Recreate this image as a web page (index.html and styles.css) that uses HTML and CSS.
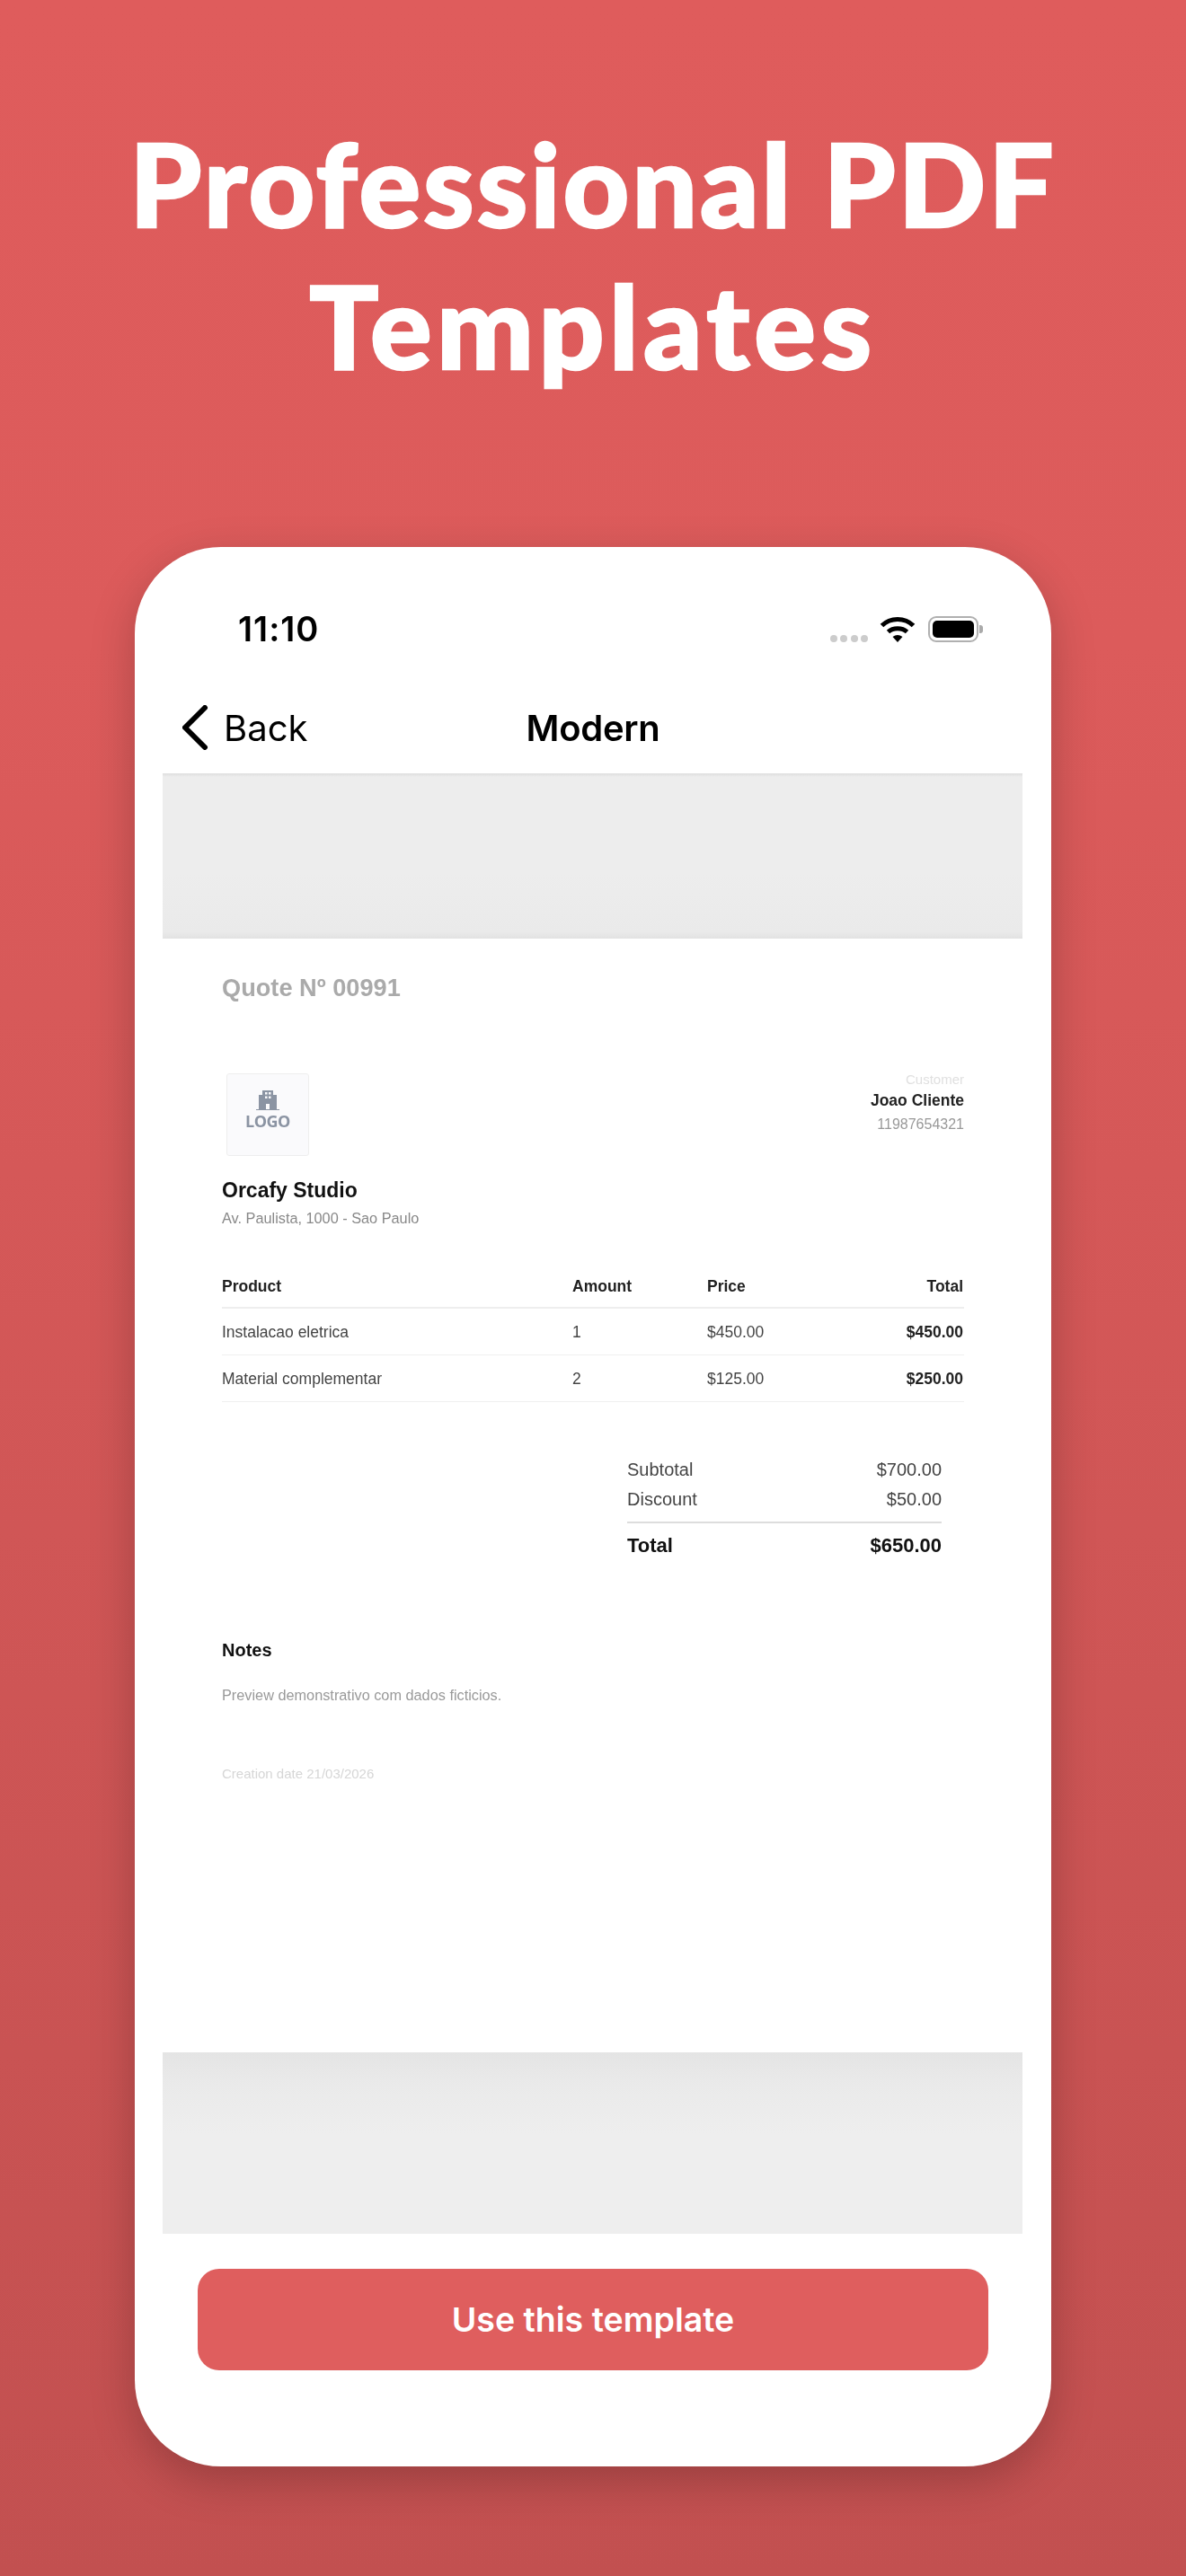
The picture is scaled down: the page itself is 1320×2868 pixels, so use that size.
FILE: index.html
```html
<!DOCTYPE html>
<html lang="en">
<head>
    <meta charset="UTF-8">
    <meta name="viewport" content="width=device-width, initial-scale=1.0">
    <title>Professional PDF Templates</title>
    <link rel="stylesheet" href="styles.css">
</head>
<body>
<h1 class="headline">Professional PDF<br><span class="headline-second">Templates</span></h1>

<div class="phone">
    <div class="status">
        <span class="clock">11:10</span>
        <div class="status-icons">
            <div class="signal"><i></i><i></i><i></i><i></i></div>
            <svg class="wifi" width="40" height="30" viewBox="0 0 40 30">
                <path d="M2.5 11.5C12 2 28 2 37.500 11.500" fill="none" stroke="#000" stroke-width="5"/>
                <path d="M9.500 18.500C15 13.500 25 13.500 30.500 18.500" fill="none" stroke="#000" stroke-width="5"/>
                <path d="M14.500 24Q20 20 25.500 24L20 30Z" fill="#000"/>
            </svg>
            <div class="battery"><div class="battery-level"></div></div>
        </div>
    </div>

    <div class="nav">
        <div class="back">
            <svg width="30" height="50" viewBox="0 0 30 50">
                <path d="M26 3L4 25L26 47" fill="none" stroke="#000" stroke-width="6" stroke-linecap="round" stroke-linejoin="round"/>
            </svg>
            <span>Back</span>
        </div>
        <div class="nav-title">Modern</div>
    </div>

    <div class="sheet-edge sheet-edge-top"></div>

    <div class="doc">
        <div class="doc-number">Quote Nº 00991</div>

        <div class="doc-head">
            <div>
                <div class="logo-box">
                    <svg width="26" height="22" viewBox="0 0 26 22">
                        <path d="M7 0H19V5H23V21H26V22H0V21H3V5H7Z" fill="#8b94a3"/>
                        <path d="M10 2h2.500v2.500H10zM14 2h2.500v2.500H14zM10 6.500h2.500V9H10zM14 6.500h2.500V9H14zM11 15h4v6h-4z" fill="#fafafc"/>
                    </svg>
                    <span class="logo-word">LOGO</span>
                </div>
                <div class="company">Orcafy Studio</div>
                <div class="address">Av. Paulista, 1000 - Sao Paulo</div>
            </div>
            <div class="customer">
                <div class="customer-label">Customer</div>
                <div class="customer-name">Joao Cliente</div>
                <div class="customer-phone">11987654321</div>
            </div>
        </div>

        <div class="items">
            <div class="item-row item-head">
                <span>Product</span><span>Amount</span><span>Price</span><span class="item-total">Total</span>
            </div>
            <div class="item-row">
                <span>Instalacao eletrica</span><span>1</span><span>$450.00</span><span class="item-total">$450.00</span>
            </div>
            <div class="item-row">
                <span>Material complementar</span><span>2</span><span>$125.00</span><span class="item-total">$250.00</span>
            </div>
        </div>

        <div class="totals">
            <div class="totals-row"><span>Subtotal</span><span>$700.00</span></div>
            <div class="totals-row"><span>Discount</span><span>$50.00</span></div>
            <div class="totals-row totals-grand"><span>Total</span><span>$650.00</span></div>
        </div>

        <div class="notes-title">Notes</div>
        <div class="notes-text">Preview demonstrativo com dados ficticios.</div>
        <div class="created">Creation date 21/03/2026</div>
    </div>

    <div class="sheet-edge sheet-edge-bottom"></div>

    <div class="use-btn">Use this template</div>
</div>
</body>
</html>
```

FILE: styles.css
```css
* {
    box-sizing: border-box;
}
html, body {
    margin: 0;
    padding: 0;
}
body {
    width: 1320px;
    height: 2868px;
    overflow: hidden;
    background: linear-gradient(180deg, #df5c5c 0%, #dc5b5b 25%, #c25050 100%);
    font-family: "Liberation Sans", Arial, sans-serif;
}

.headline {
    margin: 0;
    height: 609px;
    padding-top: 125px;
    text-align: center;
    color: #fff;
    font-family: Lato, "Noto Sans", sans-serif;
    font-weight: 900;
    font-size: 128px;
    line-height: 158px;
    letter-spacing: 3px;
    -webkit-text-stroke: 2.5px #fff;
}
.headline-second {
    letter-spacing: 5.500px;
}

.phone {
    width: 1020px;
    height: 2137px;
    margin-left: 150px;
    display: flex;
    flex-direction: column;
    background: #fff;
    border-radius: 96px;
    box-shadow: 0 16px 50px rgba(0, 0, 0, 0.22);
}

.status {
    display: flex;
    justify-content: space-between;
    align-items: center;
    height: 30px;
    margin-top: 76px;
    padding: 0 81px 0 115px;
    font-family: Inter, sans-serif;
    filter: blur(0.5px);
}
.clock {
    font-size: 38px;
    font-weight: 600;
    letter-spacing: 1px;
    color: #000;
}
.status-icons {
    display: flex;
    align-items: center;
}
.signal {
    display: flex;
    gap: 3.500px;
    margin: 22px 13px 0 0;
}
.signal i {
    width: 8px;
    height: 8px;
    border-radius: 50%;
    background: #ccc;
}
.battery {
    position: relative;
    width: 56px;
    height: 29px;
    margin-left: 14px;
    padding: 3px;
    border: 2px solid #b0b0b0;
    border-radius: 9px;
}
.battery::after {
    content: "";
    position: absolute;
    right: -7px;
    top: 8px;
    width: 4px;
    height: 9px;
    background: #aaa;
    border-radius: 0 3px 3px 0;
}
.battery-level {
    width: 100%;
    height: 100%;
    background: #000;
    border-radius: 5px;
}

.nav {
    display: grid;
    grid-template-columns: 1fr auto 1fr;
    align-items: center;
    height: 146px;
    padding: 44px 52px 0;
    font-family: Inter, sans-serif;
    font-size: 40px;
    color: #000;
    filter: blur(0.5px);
}
.back {
    display: flex;
    align-items: center;
    gap: 17px;
}
.nav-title {
    font-weight: 600;
    letter-spacing: -0.300px;
}

.sheet-edge {
    height: 184px;
    margin: 0 32px 0 31px;
    background: linear-gradient(180deg, #dedede 0, #ededed 4px, #ededed 60%, #eaeaea 96%, #e2e2e2 100%);
}
.sheet-edge-bottom {
    height: 202px;
    background: linear-gradient(180deg, #e4e4e4 0%, #eaeaea 18%, #eeeeee 45%, #eeeeee 100%);
}

.doc {
    flex: 1;
    margin: 0 97px;
    padding-top: 39px;
    filter: blur(0.7px);
}
.doc-number {
    font-size: 27.200px;
    line-height: 32px;
    font-weight: 700;
    color: #aaa;
}
.doc-head {
    display: flex;
    justify-content: space-between;
    margin-top: 77px;
}
.logo-box {
    display: flex;
    flex-direction: column;
    align-items: center;
    width: 92px;
    height: 92px;
    margin: 2px 0 0 5px;
    padding-top: 18px;
    background: #fafafc;
    border: 1px solid #eee;
    border-radius: 3px;
}
.logo-word {
    margin-top: 2px;
    font-family: "Open Sans", sans-serif;
    font-size: 18px;
    line-height: 20px;
    letter-spacing: -0.500px;
    font-weight: 700;
    color: #8b94a3;
}
.company {
    margin-top: 24px;
    font-size: 23px;
    line-height: 28px;
    font-weight: 700;
    color: #111;
}
.address {
    margin-top: 7px;
    font-size: 16.300px;
    line-height: 20px;
    color: #888;
}
.customer {
    text-align: right;
}
.customer-label {
    font-size: 15px;
    line-height: 18px;
    color: #e0e0e0;
}
.customer-name {
    margin-top: 4px;
    font-size: 17.500px;
    line-height: 21px;
    font-weight: 700;
    color: #222;
}
.customer-phone {
    margin-top: 6px;
    font-size: 16px;
    line-height: 20px;
    color: #999;
}

.items {
    margin-top: 56px;
}
.item-row {
    display: grid;
    grid-template-columns: 390px 150px 1fr auto;
    padding: 16px 1px 15px 0;
    border-bottom: 1px solid #f0f0f0;
    font-size: 17.500px;
    line-height: 20px;
    color: #444;
}
.item-head {
    padding-top: 0;
    padding-bottom: 13px;
    border-bottom: 2px solid #eee;
    font-weight: 700;
    color: #222;
}
.item-total {
    font-weight: 700;
    color: #222;
}

.totals {
    width: 350px;
    margin: 59px 25px 0 auto;
}
.totals-row {
    display: flex;
    justify-content: space-between;
    font-size: 20px;
    line-height: 33px;
    color: #444;
}
.totals-grand {
    margin-top: 8px;
    padding-top: 11px;
    border-top: 2px solid #ddd;
    font-size: 22px;
    line-height: 28px;
    font-weight: 700;
    color: #111;
}

.notes-title {
    margin-top: 90px;
    font-size: 20px;
    line-height: 24px;
    font-weight: 700;
    color: #111;
}
.notes-text {
    margin-top: 28px;
    font-size: 16.300px;
    line-height: 20px;
    color: #999;
}
.created {
    margin-top: 69px;
    font-size: 15px;
    line-height: 18px;
    color: #d6d6d6;
}

.use-btn {
    display: flex;
    align-items: center;
    justify-content: center;
    height: 113px;
    margin: 39px 70px 107px;
    background: #df5e5e;
    border-radius: 24px;
    color: #fff;
    font-family: Inter, sans-serif;
    font-size: 37.500px;
    font-weight: 600;
}
```
